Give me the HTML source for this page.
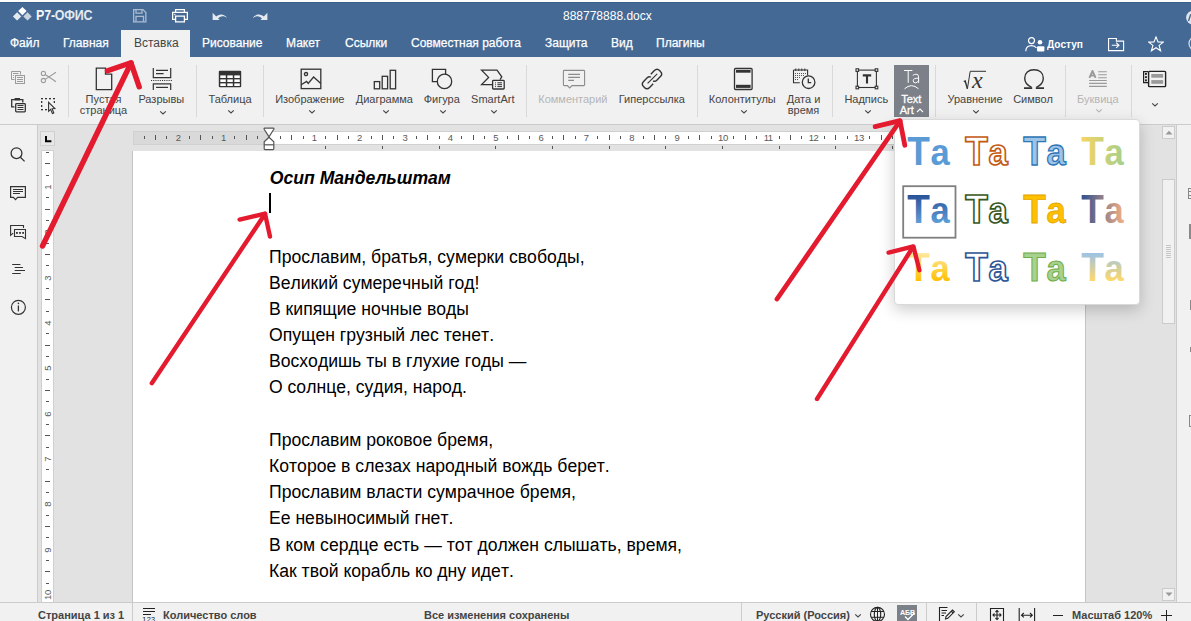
<!DOCTYPE html>
<html><head><meta charset="utf-8">
<style>
*{box-sizing:border-box;margin:0;padding:0}
html,body{width:1191px;height:621px;overflow:hidden}
body{position:relative;background:#e2e2e2;font-family:"Liberation Sans",sans-serif;color:#444}
.a{position:absolute}
.t{position:absolute;white-space:nowrap;line-height:1}
#strip{left:0;top:0;width:1191px;height:2px;background:#fcfcfa}
#hdr{left:0;top:2px;width:1191px;height:55px;background:#446995;border-top:1px solid #3b5f8f}
#tb{left:0;top:57px;width:1191px;height:68px;background:#f1f1f1;border-bottom:1px solid #cbcbcb}
#lsb{left:0;top:125px;width:38px;height:477px;background:#f1f1f1;border-right:1px solid #cbcbcb}
#rsb{left:1176px;top:125px;width:15px;height:477px;background:#f1f1f1;border-left:1px solid #cbcbcb}
#page{left:132px;top:151px;width:954px;height:460px;background:#fff;border:1px solid #c4c4c4;border-top:none}
#sb{left:0;top:602px;width:1191px;height:19px;background:#f1f1f1;border-top:1px solid #cbcbcb}
.tab{position:absolute;top:36px;font-size:12px;color:#fff;white-space:nowrap;line-height:14px;-webkit-text-stroke:0.25px currentColor}
.lbl{position:absolute;font-size:11px;color:#444;white-space:nowrap;line-height:11px;text-align:center}
.dis{color:#b5b5b5}
.sep{position:absolute;top:65px;width:1px;height:52px;background:#d9d9d9}
.doc{position:absolute;left:269px;font-size:17.6px;color:#000;white-space:nowrap;line-height:20px;font-kerning:none}
.stt{position:absolute;top:609px;font-size:11px;font-weight:bold;color:#444;white-space:nowrap;line-height:13px}
</style></head><body>
<div id="strip" class="a"></div>
<div id="hdr" class="a"></div>
<div id="tb" class="a"></div>
<div id="lsb" class="a"></div>
<div id="rsb" class="a"></div>
<div id="page" class="a"></div>
<div id="sb" class="a"></div>


<!-- logo -->
<svg class="a" style="left:12px;top:6px" width="21" height="16" viewBox="0 0 21 16">
<path d="M10.4 0.9 L14.6 5.1 L10.4 9.3 L6.2 5.1Z" fill="#ffffff"/>
<path d="M5.1 6.2 L9.3 10.4 L5.1 14.6 L0.9 10.4Z" fill="#e4e9f0"/>
<path d="M15.5 6.2 L19.7 10.4 L15.5 14.6 L11.3 10.4Z" fill="#c9d3df"/>
</svg>
<div class="t" style="left:36px;top:7.5px;font-size:14px;font-weight:bold;color:#f3f5f8;transform:scaleX(0.89);transform-origin:0 0;letter-spacing:-0.2px">Р7-<span style="color:#e3e9f0">ОФИС</span></div>
<!-- save -->
<svg class="a" style="left:133px;top:9px;opacity:.55" width="14" height="14" viewBox="0 0 14 14" fill="none" stroke="#fff" stroke-width="1.3">
<path d="M0.65 0.65 H10 L12.85 3.5 V12.85 H0.65Z"/><path d="M3 0.65 V4.2 H9 V0.65"/><path d="M3 12.85 V7.3 H10.5 V12.85"/>
</svg>
<!-- print -->
<svg class="a" style="left:172px;top:9px" width="17" height="14" viewBox="0 0 17 14" fill="none" stroke="#fff" stroke-width="1.3">
<path d="M3.6 3.2 V0.65 H12.4 V3.2"/><path d="M3.6 10.4 H0.65 V3.4 H15.35 V10.4 H12.4"/><path d="M3.6 7.2 H12.4 V12.85 H3.6Z"/><rect x="2.2" y="4.9" width="1.2" height="1.2" fill="#fff" stroke="none"/>
</svg>
<!-- undo -->
<svg class="a" style="left:212px;top:12px" width="16" height="9" viewBox="0 0 16 9">
<path d="M0.6 0.8 V8.1 H7.6Z" fill="#e6eaf0"/>
<path d="M3.5 5.2 C7 1.5 12 1.2 15.4 6.2 C12 3.4 8 3.6 5.5 7.2Z" fill="#e6eaf0"/>
</svg>
<!-- redo -->
<svg class="a" style="left:252px;top:12px;transform:scaleX(-1)" width="16" height="9" viewBox="0 0 16 9">
<path d="M0.6 0.8 V8.1 H7.6Z" fill="#e6eaf0"/>
<path d="M3.5 5.2 C7 1.5 12 1.2 15.4 6.2 C12 3.4 8 3.6 5.5 7.2Z" fill="#e6eaf0"/>
</svg>
<!-- right header -->
<svg class="a" style="left:1025px;top:37px" width="20" height="15" viewBox="0 0 20 15" fill="none" stroke="#fff" stroke-width="1.2">
<circle cx="6.5" cy="3.6" r="3"/><path d="M0.8 14.2 C0.8 10.5 3 8.6 6.5 8.6 C9 8.6 10.5 9.5 11.5 11"/>
<circle cx="15" cy="5.2" r="2.3" fill="#fff" stroke="none"/><rect x="12" y="9.2" width="7.4" height="5.4" rx="1" fill="#fff" stroke="none"/>
</svg>
<div class="t" style="left:1047px;top:39px;font-size:11px;font-weight:bold;color:#fff;transform:scaleX(0.92);transform-origin:0 0">Доступ</div>
<svg class="a" style="left:1108px;top:38px" width="17" height="14" viewBox="0 0 17 14" fill="none" stroke="#fff" stroke-width="1.1">
<path d="M0.55 0.55 H8.4 V3.1 H15.6 V12.6 H0.55Z"/><path d="M3.8 7.3 H11 M8.2 4.7 L11 7.3 L8.2 9.9"/>
</svg>
<svg class="a" style="left:1148px;top:36px" width="16" height="16" viewBox="0 0 16 16" fill="none" stroke="#fff" stroke-width="1.1">
<path d="M8 0.9 L10 6 L15.3 6.1 L11.1 9.4 L12.6 14.8 L8 11.7 L3.4 14.8 L4.9 9.4 L0.7 6.1 L6 6Z"/>
</svg>
<svg class="a" style="left:1183px;top:36px" width="8" height="16" viewBox="0 0 8 16" fill="none" stroke="#dfe5ec" stroke-width="1.2">
<circle cx="13" cy="7.6" r="7"/>
</svg>
<svg class="a" style="left:1178px;top:8px" width="13" height="18" viewBox="0 0 13 18">
<circle cx="15" cy="9.6" r="6.9" fill="#dfe5ec"/><path d="M10.5 13 L12.5 7 L13 7" stroke="#446995" stroke-width="1.4" fill="none"/>
</svg>

<!-- left sidebar icons -->
<svg class="a" style="left:9px;top:146px" width="18" height="18" viewBox="0 0 18 18" fill="none" stroke="#333" stroke-width="1.3">
<circle cx="7.5" cy="7.2" r="5.4"/><path d="M11.4 11.2 L15.6 15.4"/>
</svg>
<svg class="a" style="left:9px;top:185px" width="18" height="16" viewBox="0 0 18 16" fill="none" stroke="#333" stroke-width="1.2">
<path d="M1.6 1.6 H16.4 V12.4 H8.6 L6.5 14.6 L4.4 12.4 H1.6Z"/>
<path d="M4 4.5 H14 M4 6.5 H14 M4 8.5 H11" stroke-width="1"/>
</svg>
<svg class="a" style="left:9px;top:224px" width="18" height="16" viewBox="0 0 18 16" fill="none" stroke="#333" stroke-width="1.1">
<path d="M4.2 9.2 L1.6 11.4 V1.5 H14.5 V4"/>
<path d="M5.5 5.5 H16.5 V14.6 L13 12.5 H5.5Z"/>
<g fill="#333" stroke="none"><rect x="7" y="8" width="1.8" height="1.8"/><rect x="10.1" y="8" width="1.8" height="1.8"/><rect x="13.2" y="8" width="1.8" height="1.8"/></g>
</svg>
<svg class="a" style="left:10px;top:262px" width="17" height="14" viewBox="0 0 17 14" fill="none" stroke="#333" stroke-width="1.1">
<path d="M2.2 2.5 H10.4 M4.7 5.5 H12.9 M4.7 8.5 H15 M2.2 11.5 H10.7"/>
</svg>
<svg class="a" style="left:10px;top:299px" width="17" height="17" viewBox="0 0 17 17" fill="none" stroke="#333" stroke-width="1.2">
<circle cx="8.4" cy="8.3" r="7"/><path d="M8.4 6.5 V12.4" stroke-width="1.3"/><circle cx="8.4" cy="4.4" r="0.8" fill="#333" stroke="none"/>
</svg>
<!-- doc area -->
<div class="a" style="left:133px;top:131px;width:952px;height:14px;background:#fff;border:1px solid #d0d0d0"></div>
<div class="a" style="left:134px;top:132px;width:135px;height:12px;background:#d9d9d9"></div>
<div class="a" style="left:144px;top:136px;width:1px;height:3px;background:#555"></div>
<div class="a" style="left:155px;top:135px;width:1px;height:5px;background:#555"></div>
<div class="a" style="left:166px;top:136px;width:1px;height:3px;background:#555"></div>
<div class="t" style="left:168.3px;top:132.5px;width:20px;text-align:center;font-size:9.5px;color:#5a5a5a">2</div>
<div class="a" style="left:189px;top:136px;width:1px;height:3px;background:#555"></div>
<div class="a" style="left:200px;top:135px;width:1px;height:5px;background:#555"></div>
<div class="a" style="left:212px;top:136px;width:1px;height:3px;background:#555"></div>
<div class="t" style="left:213.6px;top:132.5px;width:20px;text-align:center;font-size:9.5px;color:#5a5a5a">1</div>
<div class="a" style="left:234px;top:136px;width:1px;height:3px;background:#555"></div>
<div class="a" style="left:246px;top:135px;width:1px;height:5px;background:#555"></div>
<div class="a" style="left:257px;top:136px;width:1px;height:3px;background:#555"></div>
<div class="a" style="left:280px;top:136px;width:1px;height:3px;background:#555"></div>
<div class="a" style="left:291px;top:135px;width:1px;height:5px;background:#555"></div>
<div class="a" style="left:303px;top:136px;width:1px;height:3px;background:#555"></div>
<div class="t" style="left:304.4px;top:132.5px;width:20px;text-align:center;font-size:9.5px;color:#5a5a5a">1</div>
<div class="a" style="left:325px;top:136px;width:1px;height:3px;background:#555"></div>
<div class="a" style="left:337px;top:135px;width:1px;height:5px;background:#555"></div>
<div class="a" style="left:348px;top:136px;width:1px;height:3px;background:#555"></div>
<div class="t" style="left:349.7px;top:132.5px;width:20px;text-align:center;font-size:9.5px;color:#5a5a5a">2</div>
<div class="a" style="left:371px;top:136px;width:1px;height:3px;background:#555"></div>
<div class="a" style="left:382px;top:135px;width:1px;height:5px;background:#555"></div>
<div class="a" style="left:393px;top:136px;width:1px;height:3px;background:#555"></div>
<div class="t" style="left:395.1px;top:132.5px;width:20px;text-align:center;font-size:9.5px;color:#5a5a5a">3</div>
<div class="a" style="left:416px;top:136px;width:1px;height:3px;background:#555"></div>
<div class="a" style="left:427px;top:135px;width:1px;height:5px;background:#555"></div>
<div class="a" style="left:439px;top:136px;width:1px;height:3px;background:#555"></div>
<div class="t" style="left:440.4px;top:132.5px;width:20px;text-align:center;font-size:9.5px;color:#5a5a5a">4</div>
<div class="a" style="left:461px;top:136px;width:1px;height:3px;background:#555"></div>
<div class="a" style="left:473px;top:135px;width:1px;height:5px;background:#555"></div>
<div class="a" style="left:484px;top:136px;width:1px;height:3px;background:#555"></div>
<div class="t" style="left:485.8px;top:132.5px;width:20px;text-align:center;font-size:9.5px;color:#5a5a5a">5</div>
<div class="a" style="left:507px;top:136px;width:1px;height:3px;background:#555"></div>
<div class="a" style="left:518px;top:135px;width:1px;height:5px;background:#555"></div>
<div class="a" style="left:529px;top:136px;width:1px;height:3px;background:#555"></div>
<div class="t" style="left:531.1px;top:132.5px;width:20px;text-align:center;font-size:9.5px;color:#5a5a5a">6</div>
<div class="a" style="left:552px;top:136px;width:1px;height:3px;background:#555"></div>
<div class="a" style="left:563px;top:135px;width:1px;height:5px;background:#555"></div>
<div class="a" style="left:575px;top:136px;width:1px;height:3px;background:#555"></div>
<div class="t" style="left:576.5px;top:132.5px;width:20px;text-align:center;font-size:9.5px;color:#5a5a5a">7</div>
<div class="a" style="left:597px;top:136px;width:1px;height:3px;background:#555"></div>
<div class="a" style="left:609px;top:135px;width:1px;height:5px;background:#555"></div>
<div class="a" style="left:620px;top:136px;width:1px;height:3px;background:#555"></div>
<div class="t" style="left:621.8px;top:132.5px;width:20px;text-align:center;font-size:9.5px;color:#5a5a5a">8</div>
<div class="a" style="left:643px;top:136px;width:1px;height:3px;background:#555"></div>
<div class="a" style="left:654px;top:135px;width:1px;height:5px;background:#555"></div>
<div class="a" style="left:665px;top:136px;width:1px;height:3px;background:#555"></div>
<div class="t" style="left:667.2px;top:132.5px;width:20px;text-align:center;font-size:9.5px;color:#5a5a5a">9</div>
<div class="a" style="left:688px;top:136px;width:1px;height:3px;background:#555"></div>
<div class="a" style="left:699px;top:135px;width:1px;height:5px;background:#555"></div>
<div class="a" style="left:711px;top:136px;width:1px;height:3px;background:#555"></div>
<div class="t" style="left:712.9px;top:132.5px;width:20px;text-align:center;font-size:9.5px;color:#5a5a5a;letter-spacing:-0.4px">10</div>
<div class="a" style="left:733px;top:136px;width:1px;height:3px;background:#555"></div>
<div class="a" style="left:745px;top:135px;width:1px;height:5px;background:#555"></div>
<div class="a" style="left:756px;top:136px;width:1px;height:3px;background:#555"></div>
<div class="t" style="left:758.2px;top:132.5px;width:20px;text-align:center;font-size:9.5px;color:#5a5a5a;letter-spacing:-0.4px">11</div>
<div class="a" style="left:779px;top:136px;width:1px;height:3px;background:#555"></div>
<div class="a" style="left:790px;top:135px;width:1px;height:5px;background:#555"></div>
<div class="a" style="left:801px;top:136px;width:1px;height:3px;background:#555"></div>
<div class="t" style="left:803.6px;top:132.5px;width:20px;text-align:center;font-size:9.5px;color:#5a5a5a;letter-spacing:-0.4px">12</div>
<div class="a" style="left:824px;top:136px;width:1px;height:3px;background:#555"></div>
<div class="a" style="left:835px;top:135px;width:1px;height:5px;background:#555"></div>
<div class="a" style="left:847px;top:136px;width:1px;height:3px;background:#555"></div>
<div class="t" style="left:849.0px;top:132.5px;width:20px;text-align:center;font-size:9.5px;color:#5a5a5a;letter-spacing:-0.4px">13</div>
<div class="a" style="left:869px;top:136px;width:1px;height:3px;background:#555"></div>
<div class="a" style="left:881px;top:135px;width:1px;height:5px;background:#555"></div>
<div class="a" style="left:892px;top:136px;width:1px;height:3px;background:#555"></div>
<div class="t" style="left:894.4px;top:132.5px;width:20px;text-align:center;font-size:9.5px;color:#5a5a5a;letter-spacing:-0.4px">14</div>
<div class="a" style="left:915px;top:136px;width:1px;height:3px;background:#555"></div>
<div class="a" style="left:926px;top:135px;width:1px;height:5px;background:#555"></div>
<div class="a" style="left:937px;top:136px;width:1px;height:3px;background:#555"></div>
<div class="t" style="left:939.6px;top:132.5px;width:20px;text-align:center;font-size:9.5px;color:#5a5a5a;letter-spacing:-0.4px">15</div>
<div class="a" style="left:960px;top:136px;width:1px;height:3px;background:#555"></div>
<div class="a" style="left:971px;top:135px;width:1px;height:5px;background:#555"></div>
<div class="a" style="left:983px;top:136px;width:1px;height:3px;background:#555"></div>
<div class="t" style="left:985.1px;top:132.5px;width:20px;text-align:center;font-size:9.5px;color:#5a5a5a;letter-spacing:-0.4px">16</div>
<div class="a" style="left:1006px;top:136px;width:1px;height:3px;background:#555"></div>
<div class="a" style="left:1017px;top:135px;width:1px;height:5px;background:#555"></div>
<div class="a" style="left:1028px;top:136px;width:1px;height:3px;background:#555"></div>
<div class="t" style="left:1030.3px;top:132.5px;width:20px;text-align:center;font-size:9.5px;color:#5a5a5a;letter-spacing:-0.4px">17</div>
<div class="a" style="left:1051px;top:136px;width:1px;height:3px;background:#555"></div>
<div class="a" style="left:325px;top:146px;width:1px;height:3px;background:#555"></div>
<div class="a" style="left:382px;top:146px;width:1px;height:3px;background:#555"></div>
<div class="a" style="left:439px;top:146px;width:1px;height:3px;background:#555"></div>
<div class="a" style="left:495px;top:146px;width:1px;height:3px;background:#555"></div>
<div class="a" style="left:552px;top:146px;width:1px;height:3px;background:#555"></div>
<div class="a" style="left:609px;top:146px;width:1px;height:3px;background:#555"></div>
<div class="a" style="left:665px;top:146px;width:1px;height:3px;background:#555"></div>
<div class="a" style="left:722px;top:146px;width:1px;height:3px;background:#555"></div>
<div class="a" style="left:779px;top:146px;width:1px;height:3px;background:#555"></div>
<div class="a" style="left:835px;top:146px;width:1px;height:3px;background:#555"></div>
<div class="a" style="left:892px;top:146px;width:1px;height:3px;background:#555"></div>
<div class="a" style="left:949px;top:146px;width:1px;height:3px;background:#555"></div>
<div class="a" style="left:1006px;top:146px;width:1px;height:3px;background:#555"></div>
<svg class="a" style="left:263px;top:127px" width="12" height="24" viewBox="0 0 12 24" fill="#fff" stroke="#555" stroke-width="1.2">
<path d="M1.6 1.2 H10.4 Q11.2 1.2 10.8 2.2 L6 9.8 L1.2 2.2 Q0.8 1.2 1.6 1.2Z"/>
<path d="M6 10.2 L10.8 14.8 V21.8 Q10.8 22.6 10 22.6 H2 Q1.2 22.6 1.2 21.8 V14.8Z"/>
<path d="M1.2 17.8 H10.8"/>
</svg>
<div class="a" style="left:40px;top:131px;width:15px;height:15px;background:#e8e8e8;border:1px solid #d0d0d0"></div>
<svg class="a" style="left:44px;top:135px" width="9" height="9" viewBox="0 0 9 9"><path d="M2 1 V6.2 H7.4" fill="none" stroke="#000" stroke-width="2"/></svg>
<div class="a" style="left:41px;top:150px;width:13px;height:452px;background:#fff;border:1px solid #d0d0d0;border-bottom:none"></div>
<div class="t" style="left:37.5px;top:182.0px;width:20px;height:10px;text-align:center;font-size:9.5px;line-height:10px;color:#5a5a5a;transform:rotate(-90deg)">1</div>
<div class="t" style="left:37.5px;top:227.3px;width:20px;height:10px;text-align:center;font-size:9.5px;line-height:10px;color:#5a5a5a;transform:rotate(-90deg)">2</div>
<div class="t" style="left:37.5px;top:272.7px;width:20px;height:10px;text-align:center;font-size:9.5px;line-height:10px;color:#5a5a5a;transform:rotate(-90deg)">3</div>
<div class="t" style="left:37.5px;top:318.0px;width:20px;height:10px;text-align:center;font-size:9.5px;line-height:10px;color:#5a5a5a;transform:rotate(-90deg)">4</div>
<div class="t" style="left:37.5px;top:363.4px;width:20px;height:10px;text-align:center;font-size:9.5px;line-height:10px;color:#5a5a5a;transform:rotate(-90deg)">5</div>
<div class="t" style="left:37.5px;top:408.7px;width:20px;height:10px;text-align:center;font-size:9.5px;line-height:10px;color:#5a5a5a;transform:rotate(-90deg)">6</div>
<div class="t" style="left:37.5px;top:454.1px;width:20px;height:10px;text-align:center;font-size:9.5px;line-height:10px;color:#5a5a5a;transform:rotate(-90deg)">7</div>
<div class="t" style="left:37.5px;top:499.4px;width:20px;height:10px;text-align:center;font-size:9.5px;line-height:10px;color:#5a5a5a;transform:rotate(-90deg)">8</div>
<div class="t" style="left:37.5px;top:544.8px;width:20px;height:10px;text-align:center;font-size:9.5px;line-height:10px;color:#5a5a5a;transform:rotate(-90deg)">9</div>
<div class="t" style="left:37.5px;top:590.1px;width:20px;height:10px;text-align:center;font-size:9.5px;line-height:10px;color:#5a5a5a;transform:rotate(-90deg);letter-spacing:-0.4px">10</div>
<div class="a" style="left:46px;top:152px;width:3px;height:1px;background:#555"></div>
<div class="a" style="left:45px;top:163px;width:5px;height:1px;background:#555"></div>
<div class="a" style="left:46px;top:175px;width:3px;height:1px;background:#555"></div>
<div class="a" style="left:46px;top:197px;width:3px;height:1px;background:#555"></div>
<div class="a" style="left:45px;top:209px;width:5px;height:1px;background:#555"></div>
<div class="a" style="left:46px;top:220px;width:3px;height:1px;background:#555"></div>
<div class="a" style="left:46px;top:243px;width:3px;height:1px;background:#555"></div>
<div class="a" style="left:45px;top:254px;width:5px;height:1px;background:#555"></div>
<div class="a" style="left:46px;top:265px;width:3px;height:1px;background:#555"></div>
<div class="a" style="left:46px;top:288px;width:3px;height:1px;background:#555"></div>
<div class="a" style="left:45px;top:299px;width:5px;height:1px;background:#555"></div>
<div class="a" style="left:46px;top:311px;width:3px;height:1px;background:#555"></div>
<div class="a" style="left:46px;top:333px;width:3px;height:1px;background:#555"></div>
<div class="a" style="left:45px;top:345px;width:5px;height:1px;background:#555"></div>
<div class="a" style="left:46px;top:356px;width:3px;height:1px;background:#555"></div>
<div class="a" style="left:46px;top:379px;width:3px;height:1px;background:#555"></div>
<div class="a" style="left:45px;top:390px;width:5px;height:1px;background:#555"></div>
<div class="a" style="left:46px;top:401px;width:3px;height:1px;background:#555"></div>
<div class="a" style="left:46px;top:424px;width:3px;height:1px;background:#555"></div>
<div class="a" style="left:45px;top:435px;width:5px;height:1px;background:#555"></div>
<div class="a" style="left:46px;top:447px;width:3px;height:1px;background:#555"></div>
<div class="a" style="left:46px;top:469px;width:3px;height:1px;background:#555"></div>
<div class="a" style="left:45px;top:481px;width:5px;height:1px;background:#555"></div>
<div class="a" style="left:46px;top:492px;width:3px;height:1px;background:#555"></div>
<div class="a" style="left:46px;top:515px;width:3px;height:1px;background:#555"></div>
<div class="a" style="left:45px;top:526px;width:5px;height:1px;background:#555"></div>
<div class="a" style="left:46px;top:537px;width:3px;height:1px;background:#555"></div>
<div class="a" style="left:46px;top:560px;width:3px;height:1px;background:#555"></div>
<div class="a" style="left:45px;top:571px;width:5px;height:1px;background:#555"></div>
<div class="a" style="left:46px;top:583px;width:3px;height:1px;background:#555"></div>
<div class="a" style="left:1162px;top:126px;width:13px;height:13px;background:#f1f1f1;border:1px solid #cbcbcb"></div>
<svg class="a" style="left:1165px;top:130px" width="8" height="5" viewBox="0 0 8 5"><path d="M0.5 4.5 L4 0.8 L7.5 4.5Z" fill="#999"/></svg>
<div class="a" style="left:1162px;top:179px;width:13px;height:145px;background:#f1f1f1;border:1px solid #cbcbcb"></div>
<div class="a" style="left:1166px;top:245px;width:5px;height:1px;background:#c6c6c6"></div>
<div class="a" style="left:1166px;top:247px;width:5px;height:1px;background:#c6c6c6"></div>
<div class="a" style="left:1166px;top:249px;width:5px;height:1px;background:#c6c6c6"></div>
<div class="a" style="left:1166px;top:251px;width:5px;height:1px;background:#c6c6c6"></div>
<div class="a" style="left:1166px;top:253px;width:5px;height:1px;background:#c6c6c6"></div>
<div class="a" style="left:1166px;top:255px;width:5px;height:1px;background:#c6c6c6"></div>
<div class="a" style="left:1166px;top:257px;width:5px;height:1px;background:#c6c6c6"></div>
<div class="a" style="left:1162px;top:588px;width:13px;height:13px;background:#f1f1f1;border:1px solid #cbcbcb"></div>
<svg class="a" style="left:1165px;top:592px" width="8" height="5" viewBox="0 0 8 5"><path d="M0.5 0.5 L4 4.2 L7.5 0.5Z" fill="#999"/></svg>
<div class="a" style="left:1188px;top:188px;width:3px;height:11px;border:1px solid #888;border-right:none"></div>
<div class="a" style="left:1189px;top:191px;width:2px;height:1px;background:#888"></div>
<div class="a" style="left:1189px;top:195px;width:2px;height:1px;background:#888"></div>
<div class="a" style="left:1189px;top:224px;width:2px;height:15px;background:#8a8a8a"></div>
<div class="a" style="left:1189.5px;top:300px;width:1.5px;height:10px;background:#8a8a8a"></div>
<div class="a" style="left:1189.5px;top:347px;width:1.5px;height:5px;background:#8a8a8a"></div>
<div class="a" style="left:1188.5px;top:415px;width:2.5px;height:12px;border:1px solid #888;border-right:none"></div>

<!-- toolbar -->
<div class="sep" style="left:68px"></div>
<div class="sep" style="left:196px"></div>
<div class="sep" style="left:263px"></div>
<div class="sep" style="left:526px"></div>
<div class="sep" style="left:697px"></div>
<div class="sep" style="left:832px"></div>
<div class="sep" style="left:935px"></div>
<div class="sep" style="left:1065px"></div>
<div class="sep" style="left:1131px"></div>
<svg class="a" style="left:10px;top:70px" width="17" height="15" viewBox="0 0 17 15" fill="none" stroke="#9b9b9b" stroke-width="1">
<path d="M4.5 9.5 H1.5 V1.5 H10.5 V4.5"/><path d="M3 3.5 H8.5 M3 5.5 H4 M3 7.5 H4"/><rect x="5.5" y="5.5" width="9" height="8"/><path d="M7 7.5 H13 M7 9.5 H13 M7 11.5 H13"/>
</svg>
<svg class="a" style="left:10px;top:97px" width="17" height="16" viewBox="0 0 17 16" fill="none" stroke="#333" stroke-width="1.3">
<path d="M4.5 9.8 H1.7 V2.6 H12.8 V5.5"/><path d="M4.6 2.2 H10" stroke-width="2.4"/><rect x="5.7" y="6.7" width="9.6" height="8.1" rx="0.8"/><path d="M7.5 8.5 H13.5 M7.5 10.5 H13.5 M7.5 12.5 H13.5" stroke-width="1"/>
</svg>
<svg class="a" style="left:40px;top:70px" width="17" height="14" viewBox="0 0 17 14" fill="none" stroke="#9b9b9b" stroke-width="1.1">
<circle cx="3.4" cy="3.4" r="2.1"/><circle cx="3.4" cy="10.5" r="2.1"/><path d="M5.2 4.5 L16 11.8 M5.2 9.4 L16 2.2"/>
</svg>
<svg class="a" style="left:40px;top:97px" width="17" height="18" viewBox="0 0 17 18">
<g fill="#333"><rect x="1" y="1" width="2" height="1.3"/><rect x="5" y="1" width="2" height="1.3"/><rect x="9" y="1" width="2" height="1.3"/><rect x="13" y="1" width="2" height="1.3"/>
<rect x="1" y="4" width="1.3" height="2"/><rect x="1" y="8" width="1.3" height="2"/><rect x="1" y="12" width="2" height="1.3"/>
<rect x="13.7" y="4" width="1.3" height="2"/><rect x="5" y="12" width="2" height="1.3"/></g>
<path d="M8.6 5.3 V14.3 L10.6 12.4 L12.4 16.6 L13.8 16 L12.1 11.8 L14.9 11.6Z" fill="#f1f1f1" stroke="#333" stroke-width="1.1"/>
</svg>
<svg class="a" style="left:95px;top:67px" width="18" height="24" viewBox="0 0 18 24" fill="none" stroke="#333" stroke-width="1.3">
<path d="M1.3 1.2 H10.5 V7.2 H16.7 V22.7 H1.3Z"/>
</svg>
<svg class="a" style="left:150px;top:67px" width="24" height="24" viewBox="0 0 24 24" fill="none" stroke="#333" stroke-width="1.2">
<path d="M3.3 1 V10.6 H20.7 V1"/><path d="M6 3.4 H18 M6 6.6 H13.6"/><path d="M1 13.5 H23" stroke-dasharray="1.1 1.1"/><path d="M3.3 23 V16.8 H20.7 V23"/><path d="M6 20.4 H18"/>
</svg>
<div class="lbl " style="left:53.5px;top:94px;width:100px">Пустая</div>
<div class="lbl " style="left:53.5px;top:105px;width:100px">страница</div>
<div class="lbl " style="left:111.30000000000001px;top:94px;width:100px">Разрывы</div>
<svg class="a" style="left:159px;top:110px" width="8" height="5" viewBox="0 0 8 5"><path d="M1.2 1.3 L4 3.9 L6.8 1.3" fill="none" stroke="#444" stroke-width="1.1"/></svg>
<svg class="a" style="left:218px;top:70px" width="24" height="18" viewBox="0 0 24 18">
<rect x="0.8" y="0.8" width="22.4" height="16.4" rx="1" fill="#333"/>
<g fill="#fff"><rect x="2.3" y="5.4" width="5.5" height="2.6"/><rect x="9.3" y="5.4" width="5.5" height="2.6"/><rect x="16.3" y="5.4" width="5.5" height="2.6"/>
<rect x="2.3" y="9.4" width="5.5" height="2.6"/><rect x="9.3" y="9.4" width="5.5" height="2.6"/><rect x="16.3" y="9.4" width="5.5" height="2.6"/>
<rect x="2.3" y="13.4" width="5.5" height="2.6"/><rect x="9.3" y="13.4" width="5.5" height="2.6"/><rect x="16.3" y="13.4" width="5.5" height="2.6"/></g>
</svg>
<div class="lbl " style="left:180px;top:94px;width:100px">Таблица</div>
<svg class="a" style="left:227px;top:109px" width="8" height="5" viewBox="0 0 8 5"><path d="M1.2 1.3 L4 3.9 L6.8 1.3" fill="none" stroke="#444" stroke-width="1.1"/></svg>
<svg class="a" style="left:300px;top:68px" width="22" height="22" viewBox="0 0 22 22" fill="none" stroke="#333" stroke-width="1.3">
<rect x="1.2" y="1.2" width="19.6" height="19.4"/><circle cx="6" cy="6.1" r="1.6"/><path d="M1.2 16.8 L6.6 13.4 L8.2 15.4 L13.6 9 L20.8 15.6"/>
</svg>
<div class="lbl " style="left:259.8px;top:94px;width:100px">Изображение</div>
<svg class="a" style="left:308px;top:109px" width="8" height="5" viewBox="0 0 8 5"><path d="M1.2 1.3 L4 3.9 L6.8 1.3" fill="none" stroke="#444" stroke-width="1.1"/></svg>
<svg class="a" style="left:373px;top:69px" width="24" height="21" viewBox="0 0 24 21" fill="none" stroke="#333" stroke-width="1.3">
<rect x="1.3" y="12.6" width="5.4" height="7.2"/><rect x="9.2" y="7.3" width="5.4" height="12.5"/><rect x="17.2" y="1.3" width="5.4" height="18.5"/>
</svg>
<div class="lbl " style="left:334.3px;top:94px;width:100px">Диаграмма</div>
<svg class="a" style="left:381.7px;top:109px" width="8" height="5" viewBox="0 0 8 5"><path d="M1.2 1.3 L4 3.9 L6.8 1.3" fill="none" stroke="#444" stroke-width="1.1"/></svg>
<svg class="a" style="left:431px;top:68px" width="23" height="22" viewBox="0 0 23 22" fill="none" stroke="#333" stroke-width="1.3">
<path d="M7 13.6 H1.4 V1.3 H14.6 V6.5"/><circle cx="13.5" cy="13.4" r="7.2"/>
</svg>
<div class="lbl " style="left:391.8px;top:94px;width:100px">Фигура</div>
<svg class="a" style="left:438.8px;top:109px" width="8" height="5" viewBox="0 0 8 5"><path d="M1.2 1.3 L4 3.9 L6.8 1.3" fill="none" stroke="#444" stroke-width="1.1"/></svg>
<svg class="a" style="left:480px;top:69px" width="26" height="21" viewBox="0 0 26 21" fill="none" stroke="#333" stroke-width="1.3">
<path d="M12.2 15.6 H1.6 L8.6 8.4 L1.6 1.2 H17 L21.8 7.8 L20 10.6"/>
<rect x="12.6" y="11.4" width="11.6" height="8.6" rx="0.8"/>
<path d="M15 13.8 H15.9 M15 15.7 H15.9 M15 17.6 H15.9 M17.4 13.8 H22 M17.4 15.7 H22 M17.4 17.6 H22" stroke-width="1"/>
</svg>
<div class="lbl " style="left:442.8px;top:94px;width:100px">SmartArt</div>
<svg class="a" style="left:489.7px;top:109px" width="8" height="5" viewBox="0 0 8 5"><path d="M1.2 1.3 L4 3.9 L6.8 1.3" fill="none" stroke="#444" stroke-width="1.1"/></svg>
<svg class="a" style="left:562px;top:69px" width="24" height="21" viewBox="0 0 24 21" fill="none" stroke="#8c8c8c" stroke-width="1.1">
<path d="M2.3 1.4 H21.7 Q22.6 1.4 22.6 2.3 V15.7 Q22.6 16.6 21.7 16.6 H10 L7.7 19 L5.4 16.6 H2.3 Q1.4 16.6 1.4 15.7 V2.3 Q1.4 1.4 2.3 1.4Z"/>
<path d="M6.2 5.4 H18 M6.2 8.4 H18 M6.2 11.4 H12"/>
</svg>
<div class="lbl dis" style="left:522.9px;top:94px;width:100px">Комментарий</div>
<svg class="a" style="left:640px;top:67px" width="24" height="24" viewBox="0 0 24 24" fill="none" stroke="#333" stroke-width="1.4">
<path d="M10.8 7.2 L14.4 3.6 Q17 1 19.6 3.6 L20.4 4.4 Q23 7 20.4 9.6 L16.8 13.2 Q15 15 13.2 13.8"/>
<path d="M13.2 16.8 L9.6 20.4 Q7 23 4.4 20.4 L3.6 19.6 Q1 17 3.6 14.4 L7.2 10.8 Q9 9 10.8 10.2"/>
<path d="M7.6 16.4 L17.2 6.8" stroke-width="1.1"/>
</svg>
<div class="lbl " style="left:601.8px;top:94px;width:100px">Гиперссылка</div>
<svg class="a" style="left:733px;top:67px" width="21" height="24" viewBox="0 0 21 24" fill="none" stroke="#333" stroke-width="1.3">
<rect x="1.5" y="1.5" width="17.6" height="21" rx="1"/><rect x="3" y="3" width="14.6" height="2.7" fill="#333" stroke="none"/><rect x="3" y="17.8" width="14.6" height="3.1" fill="#333" stroke="none"/>
</svg>
<div class="lbl " style="left:692.3px;top:94px;width:100px">Колонтитулы</div>
<svg class="a" style="left:739.7px;top:109px" width="8" height="5" viewBox="0 0 8 5"><path d="M1.2 1.3 L4 3.9 L6.8 1.3" fill="none" stroke="#444" stroke-width="1.1"/></svg>
<svg class="a" style="left:792px;top:68px" width="24" height="22" viewBox="0 0 24 22" fill="none" stroke="#333" stroke-width="1.1">
<path d="M1.5 2 H15.6 V7.5 M1.5 2 V14.8 H7.8"/>
<path d="M3.8 0.5 V3 M6.8 0.5 V3 M9.8 0.5 V3 M12.8 0.5 V3" stroke-width="1"/>
<g fill="#555" stroke="none"><rect x="3" y="5" width="1" height="1"/><rect x="5" y="5" width="1" height="1"/><rect x="7" y="5" width="1" height="1"/><rect x="9" y="5" width="1" height="1"/><rect x="11" y="5" width="1" height="1"/><rect x="13" y="5" width="1" height="1"/>
<rect x="3" y="7" width="1" height="1"/><rect x="5" y="7" width="1" height="1"/><rect x="7" y="7" width="1" height="1"/><rect x="9" y="7" width="1" height="1"/><rect x="11" y="7" width="1" height="1"/>
<rect x="3" y="9" width="1" height="1"/><rect x="5" y="9" width="1" height="1"/><rect x="7" y="9" width="1" height="1"/>
<rect x="3" y="11" width="1" height="1"/><rect x="5" y="11" width="1" height="1"/></g>
<circle cx="16.6" cy="14.2" r="6.3" fill="#f1f1f1" stroke-width="1.3"/><path d="M16.3 10.6 V14.6 H19.2" stroke-width="1.3"/>
</svg>
<div class="lbl " style="left:753.5px;top:94px;width:100px">Дата и</div>
<div class="lbl " style="left:753.5px;top:105px;width:100px">время</div>
<svg class="a" style="left:855px;top:68px" width="24" height="22" viewBox="0 0 24 22" fill="none" stroke="#333" stroke-width="1.1">
<rect x="2.4" y="2.1" width="19" height="17.4"/>
<g fill="#f1f1f1"><rect x="1" y="0.8" width="2.6" height="2.6"/><rect x="20.2" y="0.8" width="2.6" height="2.6"/><rect x="1" y="18.2" width="2.6" height="2.6"/><rect x="20.2" y="18.2" width="2.6" height="2.6"/></g>
<path d="M7.8 7.4 H16.2 M12 7.4 V15.6" stroke-width="2.1"/>
</svg>
<div class="lbl " style="left:816.3px;top:94px;width:100px">Надпись</div>
<svg class="a" style="left:864px;top:109px" width="8" height="5" viewBox="0 0 8 5"><path d="M1.2 1.3 L4 3.9 L6.8 1.3" fill="none" stroke="#444" stroke-width="1.1"/></svg>
<div class="a" style="left:894px;top:65px;width:35px;height:52px;background:#7b8089"></div>
<svg class="a" style="left:903px;top:69px" width="18" height="21" viewBox="0 0 18 21" fill="none" stroke="#fff" stroke-width="1">
<path d="M1 1.5 H9.4 M5.2 1.5 V13.8"/>
<path d="M9.8 6.4 Q11.4 5.2 13.2 5.2 Q15.6 5.2 15.6 7.8 V13.8 M15.6 9.2 Q10.2 9 10.2 11.6 Q10.2 13.9 12.4 13.9 Q14.6 13.9 15.6 11.6"/>
<path d="M1.5 19.8 Q8.5 13.5 15.5 19.8"/>
</svg>
<div class="lbl" style="left:861.3px;top:94px;width:100px;color:#fff;-webkit-text-stroke:0.3px #fff">Text</div>
<div class="lbl" style="left:856.7px;top:105px;width:100px;color:#fff;-webkit-text-stroke:0.3px #fff">Art</div>
<svg class="a" style="left:916px;top:108px" width="8" height="5" viewBox="0 0 8 5"><path d="M1 4 L4 1 L7 4" fill="none" stroke="#fff" stroke-width="1.1"/></svg>
<svg class="a" style="left:962px;top:69px" width="26" height="21" viewBox="0 0 26 21" fill="none" stroke="#333">
<path d="M1.8 12.6 L3.2 12 L5.4 19.8" stroke-width="1.4"/><path d="M5.4 19.8 L8.2 2.3 H24" stroke-width="1"/>
</svg>
<div class="t" style="left:972px;top:68px;font-family:'Liberation Serif',serif;font-size:24px;color:#333;font-style:italic">x</div>
<div class="lbl " style="left:925px;top:94px;width:100px">Уравнение</div>
<svg class="a" style="left:972px;top:109px" width="8" height="5" viewBox="0 0 8 5"><path d="M1.2 1.3 L4 3.9 L6.8 1.3" fill="none" stroke="#444" stroke-width="1.1"/></svg>
<svg class="a" style="left:1022px;top:67px" width="24" height="23" viewBox="0 0 24 23" fill="none" stroke="#333">
<path d="M9.6 20.4 C4.6 18 2.7 14.6 2.7 11.2 C2.7 6 6.5 2.8 12 2.8 C17.5 2.8 21.3 6 21.3 11.2 C21.3 14.6 19.4 18 14.4 20.4" stroke-width="1.4"/>
<path d="M2 21.2 H10.2 M13.8 21.2 H22" stroke-width="1.7"/>
</svg>
<div class="lbl " style="left:983px;top:94px;width:100px">Символ</div>
<svg class="a" style="left:1088px;top:70px" width="20" height="18" viewBox="0 0 20 18" fill="none" stroke="#9a9a9a" stroke-width="1.1">
<path d="M1.4 7.9 L4.5 1 L7.6 7.9 M2.6 5.6 H6.4" stroke-width="1.9"/>
<path d="M10.2 1.7 H18.8 M10.2 4.7 H18.8 M10.2 7.7 H18.8 M1.1 10.5 H18.8 M1.1 13.4 H18.8 M1.1 16.4 H18.8"/>
</svg>
<div class="lbl dis" style="left:1047.9px;top:94px;width:100px">Буквица</div>
<svg class="a" style="left:1095px;top:108px" width="8" height="5" viewBox="0 0 8 5"><path d="M1.2 1.3 L4 3.9 L6.8 1.3" fill="none" stroke="#b5b5b5" stroke-width="1.1"/></svg>
<svg class="a" style="left:1142px;top:70px" width="25" height="18" viewBox="0 0 25 18" fill="none" stroke="#222" stroke-width="1.2">
<path d="M6.2 12.6 H1.6 V1.6 H6.2"/><rect x="3" y="3" width="1.9" height="1.9" fill="#222" stroke="none"/><rect x="3" y="6.2" width="1.9" height="1.9" fill="#222" stroke="none"/><rect x="3" y="9.4" width="1.9" height="1.9" fill="#222" stroke="none"/>
<rect x="6.6" y="1.4" width="17" height="15.2" rx="0.8" stroke-width="1.4"/>
<rect x="9.3" y="4" width="11.8" height="3.7" fill="#999" stroke="none"/><rect x="9.3" y="10.1" width="11.8" height="3.7" fill="#999" stroke="none"/>
</svg>
<svg class="a" style="left:1151px;top:102px" width="8" height="5" viewBox="0 0 8 5"><path d="M1.2 1.3 L4 3.9 L6.8 1.3" fill="none" stroke="#444" stroke-width="1.1"/></svg>

<!-- header title row -->
<div class="t" style="left:563px;top:10px;font-size:12px;color:#fff">888778888.docx</div>
<!-- tabs -->
<div class="a" style="left:121px;top:30px;width:69px;height:27px;background:#f1f1f1"></div>
<div class="tab" style="left:10px">Файл</div>
<div class="tab" style="left:63px">Главная</div>
<div class="tab" style="left:134px;color:#444;-webkit-text-stroke:0">Вставка</div>
<div class="tab" style="left:202px">Рисование</div>
<div class="tab" style="left:286px">Макет</div>
<div class="tab" style="left:345px">Ссылки</div>
<div class="tab" style="left:411px">Совместная работа</div>
<div class="tab" style="left:545px">Защита</div>
<div class="tab" style="left:611px">Вид</div>
<div class="tab" style="left:656px">Плагины</div>

<!-- document text -->
<div class="doc" style="top:168px;left:269.8px;font-weight:bold;font-style:italic">Осип Мандельштам</div>
<div class="a" style="left:269px;top:193px;width:2px;height:20px;background:#000"></div>
<div class="doc" style="top:247px">Прославим, братья, сумерки свободы,</div>
<div class="doc" style="top:273px">Великий сумеречный год!</div>
<div class="doc" style="top:299px">В кипящие ночные воды</div>
<div class="doc" style="top:325px">Опущен грузный лес тенет.</div>
<div class="doc" style="top:351px">Восходишь ты в глухие годы —</div>
<div class="doc" style="top:377px">О солнце, судия, народ.</div>
<div class="doc" style="top:430px">Прославим роковое бремя,</div>
<div class="doc" style="top:456px">Которое в слезах народный вождь берет.</div>
<div class="doc" style="top:482px">Прославим власти сумрачное бремя,</div>
<div class="doc" style="top:508px">Ее невыносимый гнет.</div>
<div class="doc" style="top:535px">В ком сердце есть — тот должен слышать, время,</div>
<div class="doc" style="top:561px">Как твой корабль ко дну идет.</div>

<!-- status bar -->
<div class="stt" style="left:38px">Страница 1 из 1</div>
<div class="stt" style="left:163px">Количество слов</div>
<div class="stt" style="left:424px">Все изменения сохранены</div>
<div class="stt" style="left:756px">Русский (Россия)</div>
<div class="stt" style="left:1072px">Масштаб 120%</div>

<!-- popup -->
<div class="a" style="left:894px;top:119px;width:246px;height:186px;background:#fff;border:1px solid #dadada;border-radius:4px;box-shadow:0 5px 15px rgba(0,0,0,0.2)"></div>
<svg class="a" style="left:895px;top:119px" width="244" height="185" viewBox="0 0 244 185" font-family="Liberation Sans" font-weight="bold">
<defs>
<linearGradient id="g0" gradientUnits="userSpaceOnUse" x1="186.2" y1="0" x2="229.2" y2="0"><stop offset="0" stop-color="#f6d563"/><stop offset="1" stop-color="#a5cf8c"/></linearGradient>
<linearGradient id="g1" gradientUnits="userSpaceOnUse" x1="0" y1="-25.4" x2="0" y2="0"><stop offset="0" stop-color="#2a5399"/><stop offset="1" stop-color="#5e9fd8"/></linearGradient>
<linearGradient id="g2" gradientUnits="userSpaceOnUse" x1="186.2" y1="0" x2="229.2" y2="0"><stop offset="0" stop-color="#2f4f8f"/><stop offset="1" stop-color="#f4b183"/></linearGradient>
<linearGradient id="g3" gradientUnits="userSpaceOnUse" x1="0" y1="-25.4" x2="0" y2="0"><stop offset="0" stop-color="#ffe8a0"/><stop offset="1" stop-color="#ffc000"/></linearGradient>
<linearGradient id="g4" gradientUnits="userSpaceOnUse" x1="0" y1="-25.4" x2="0" y2="0"><stop offset="0" stop-color="#9dc3e6"/><stop offset="1" stop-color="#ffd966"/></linearGradient>
</defs>
<rect x="8.2" y="67.2" width="52.3" height="51.5" fill="none" stroke="#7f7f7f" stroke-width="1.8"/>
<g transform="translate(0 46.00) scale(1 1.09)" fill="#5b9bd5"><text x="12.18" y="0" font-size="37">T</text><text x="35.48" y="0" font-size="34.5">a</text></g>
<g transform="translate(0 46.00) scale(1 1.09)" fill="#fff" stroke="#c55a11" stroke-width="1.6" stroke-linejoin="miter"><text x="70.18" y="0" font-size="37">T</text><text x="93.48" y="0" font-size="34.5">a</text></g>
<g transform="translate(0 46.00) scale(1 1.09)" fill="#9dc3e6" stroke="#2e75b6" stroke-width="1.2" stroke-linejoin="miter"><text x="128.18" y="0" font-size="37">T</text><text x="151.48" y="0" font-size="34.5">a</text></g>
<g transform="translate(0 46.00) scale(1 1.09)" fill="url(#g0)"><text x="186.18" y="0" font-size="37">T</text><text x="209.48" y="0" font-size="34.5">a</text></g>
<g transform="translate(0 104.00) scale(1 1.09)" fill="url(#g1)"><text x="12.18" y="0" font-size="37">T</text><text x="35.48" y="0" font-size="34.5">a</text></g>
<g transform="translate(0 104.00) scale(1 1.09)" fill="#fff" stroke="#385723" stroke-width="1.6" stroke-linejoin="miter"><text x="70.18" y="0" font-size="37">T</text><text x="93.48" y="0" font-size="34.5">a</text></g>
<g transform="translate(0 104.00) scale(1 1.09)" fill="#ffc000" stroke="#e3a600" stroke-width="0.8" stroke-linejoin="miter"><text x="128.18" y="0" font-size="37">T</text><text x="151.48" y="0" font-size="34.5">a</text></g>
<g transform="translate(0 104.00) scale(1 1.09)" fill="url(#g2)"><text x="186.18" y="0" font-size="37">T</text><text x="209.48" y="0" font-size="34.5">a</text></g>
<g transform="translate(0 162.00) scale(1 1.09)" fill="url(#g3)"><text x="12.18" y="0" font-size="37">T</text><text x="35.48" y="0" font-size="34.5">a</text></g>
<g transform="translate(0 162.00) scale(1 1.09)" fill="#fff" stroke="#2f5597" stroke-width="1.6" stroke-linejoin="miter"><text x="70.18" y="0" font-size="37">T</text><text x="93.48" y="0" font-size="34.5">a</text></g>
<g transform="translate(0 162.00) scale(1 1.09)" fill="#a9d18e" stroke="#70ad47" stroke-width="1.0" stroke-linejoin="miter"><text x="128.18" y="0" font-size="37">T</text><text x="151.48" y="0" font-size="34.5">a</text></g>
<g transform="translate(0 162.00) scale(1 1.09)" fill="url(#g4)"><text x="186.18" y="0" font-size="37">T</text><text x="209.48" y="0" font-size="34.5">a</text></g>
</svg>
<!-- status bar icons -->
<div class="a" style="left:132px;top:603px;width:1px;height:18px;background:#cbcbcb"></div>
<svg class="a" style="left:142px;top:606px" width="15" height="15" viewBox="0 0 15 15">
<path d="M1 2.5 H13 M1 5.5 H13 M1 8.5 H9" stroke="#222" stroke-width="1.1"/>
<text x="0.3" y="15.5" font-family="Liberation Sans" font-size="7.4" fill="#222" letter-spacing="0.3">123</text>
</svg>
<div class="a" style="left:741px;top:603px;width:1px;height:18px;background:#cbcbcb"></div>
<svg class="a" style="left:854px;top:613px" width="8" height="5" viewBox="0 0 8 5"><path d="M1.2 1.3 L4 3.9 L6.8 1.3" fill="none" stroke="#444" stroke-width="1.1"/></svg>
<svg class="a" style="left:869px;top:606px" width="17" height="17" viewBox="0 0 17 17" fill="none" stroke="#222" stroke-width="1.1">
<circle cx="8.5" cy="8.4" r="7"/><ellipse cx="8.5" cy="8.4" rx="3.2" ry="7"/><path d="M8.5 1.4 V15.4 M2 5.5 H15 M2 11.3 H15" stroke-width="1"/>
</svg>
<div class="a" style="left:897px;top:605px;width:20px;height:16px;background:#7b8089"></div>
<div class="t" style="left:899.5px;top:608.5px;font-size:7.5px;font-weight:bold;color:#fff;letter-spacing:-0.2px;transform:scaleX(0.95);transform-origin:0 0">АБВ</div>
<svg class="a" style="left:904px;top:612px" width="12" height="9" viewBox="0 0 12 9"><path d="M1 4.5 L4 7.5 L10.5 1" fill="none" stroke="#fff" stroke-width="1.3"/></svg>
<div class="a" style="left:926px;top:603px;width:1px;height:18px;background:#cbcbcb"></div>
<svg class="a" style="left:938px;top:606px" width="18" height="15" viewBox="0 0 18 15" fill="none" stroke="#222" stroke-width="1.1">
<path d="M9.5 1.5 H1.5 V15 M1.5 15"/><path d="M3.5 4.5 H9 M3.5 7 H8 M3.5 9.5 H6"/>
<path d="M7.5 13 L8 10.5 L14.5 4 L16.3 5.8 L9.8 12.3Z"/><path d="M13.3 5.2 L15.1 7"/>
</svg>
<svg class="a" style="left:957px;top:613px" width="8" height="5" viewBox="0 0 8 5"><path d="M1.2 1.3 L4 3.9 L6.8 1.3" fill="none" stroke="#444" stroke-width="1.1"/></svg>
<div class="a" style="left:976px;top:603px;width:1px;height:18px;background:#cbcbcb"></div>
<svg class="a" style="left:989px;top:607px" width="16" height="14" viewBox="0 0 16 14" fill="none" stroke="#222" stroke-width="1.1">
<path d="M1.5 14 V1.5 H14.5 V14"/><path d="M8 3.5 V12 M4 8 H12"/><path d="M6.5 5 L8 3.5 L9.5 5 M6.5 11 L8 12.5 L9.5 11 M5.5 6.5 L4 8 L5.5 9.5 M10.5 6.5 L12 8 L10.5 9.5"/>
</svg>
<svg class="a" style="left:1017px;top:607px" width="20" height="14" viewBox="0 0 20 14" fill="none" stroke="#222" stroke-width="1.1">
<path d="M2.2 1 V14 M17.6 1 V14"/><path d="M4.5 8.2 H15.3 M6.8 6 L4.5 8.2 L6.8 10.4 M13 6 L15.3 8.2 L13 10.4"/>
</svg>
<div class="a" style="left:1053px;top:615px;width:10px;height:1px;background:#222"></div>
<div class="a" style="left:1161px;top:615px;width:11px;height:1px;background:#222"></div>
<div class="a" style="left:1166px;top:610px;width:1px;height:11px;background:#222"></div>
<!-- arrows -->
<svg class="a" style="left:0;top:0" width="1191" height="621" viewBox="0 0 1191 621" fill="none" stroke="#e41a2e" stroke-linecap="round" stroke-linejoin="round">
<g stroke-width="5.4"><path d="M42.5 246 L131 63"/><path d="M107.5 70.8 L131 62.8 L139.2 86.8"/></g>
<g stroke-width="4.4"><path d="M151.8 383.2 L265 214"/><path d="M239.6 219.6 L265 213.6 L270 236.6"/></g>
<g stroke-width="4.8"><path d="M777 299 L900 121"/><path d="M875.2 126.6 L900 120.6 L904.8 145.2"/></g>
<g stroke-width="4.4"><path d="M817 399 L913 247"/><path d="M888.6 252.6 L913.4 246.4 L919.4 270.2"/></g>
</svg>
</body></html>
